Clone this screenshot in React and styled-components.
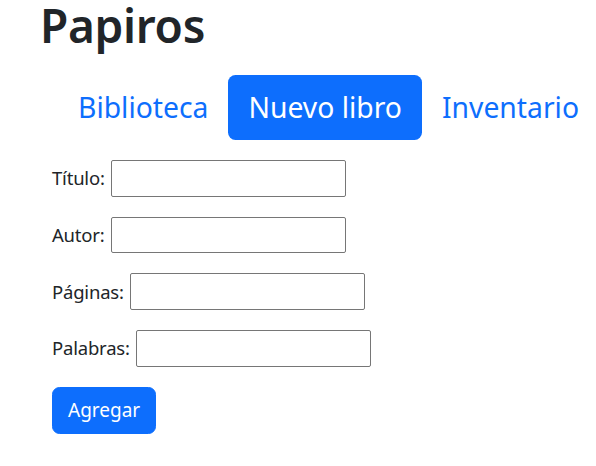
import React from "react";
import styled, { createGlobalStyle } from "styled-components";

const Global = createGlobalStyle`
  html, body { margin: 0; padding: 0; background: #fff; }
  body {
    font-family: "Noto Sans", "Open Sans", sans-serif;
    color: #212529;
  }
`;

const Page = styled.div`
  padding: 0 0 0 40px;
`;

const Title = styled.h1`
  margin: 0;
  font-size: 46px;
  font-weight: 600;
  line-height: 50px;
  letter-spacing: -0.3px;
  color: #212529;
`;

const Nav = styled.nav`
  display: flex;
  margin: 25px 0 0 18px;
`;

const NavLink = styled.a`
  display: block;
  padding: 10px 20px;
  font-size: 28.3px;
  line-height: 45px;
  border-radius: 7.5px;
  text-decoration: none;
  white-space: nowrap;
  color: ${(p) => (p.$active ? "#fff" : "#0d6efd")};
  background: ${(p) => (p.$active ? "#0d6efd" : "transparent")};
`;

const Form = styled.form`
  display: flex;
  flex-direction: column;
  align-items: flex-start;
  gap: 20px;
  margin: 20px 0 0 12px;
`;

const Row = styled.div`
  display: flex;
  align-items: center;
  gap: 6px;
`;

const Label = styled.label`
  font-size: 18.5px;
  line-height: 30px;
  letter-spacing: -0.2px;
  color: #212529;
`;

const Input = styled.input`
  box-sizing: border-box;
  width: 235px;
  height: 36.67px;
  margin: 0;
  border: 1px solid #767676;
  border-radius: 2px;
  background: #fff;
  font-size: 16px;
`;

const Button = styled.button`
  box-sizing: border-box;
  height: 47px;
  padding: 0 15px;
  border: 1px solid #0d6efd;
  border-radius: 7.5px;
  background: #0d6efd;
  color: #fff;
  font-family: inherit;
  font-size: 19px;
  line-height: 30px;
`;

const fields = ["Título", "Autor", "Páginas", "Palabras"];

export default function App() {
  return (
    <>
      <Global />
      <Page>
        <Title>Papiros</Title>
        <Nav>
          <NavLink href="#">Biblioteca</NavLink>
          <NavLink href="#" $active>Nuevo libro</NavLink>
          <NavLink href="#">Inventario</NavLink>
        </Nav>
        <Form onSubmit={(e) => e.preventDefault()}>
          {fields.map((f) => (
            <Row key={f}>
              <Label htmlFor={f}>{f}:</Label>
              <Input id={f} type="text" />
            </Row>
          ))}
          <Button type="submit">Agregar</Button>
        </Form>
      </Page>
    </>
  );
}
